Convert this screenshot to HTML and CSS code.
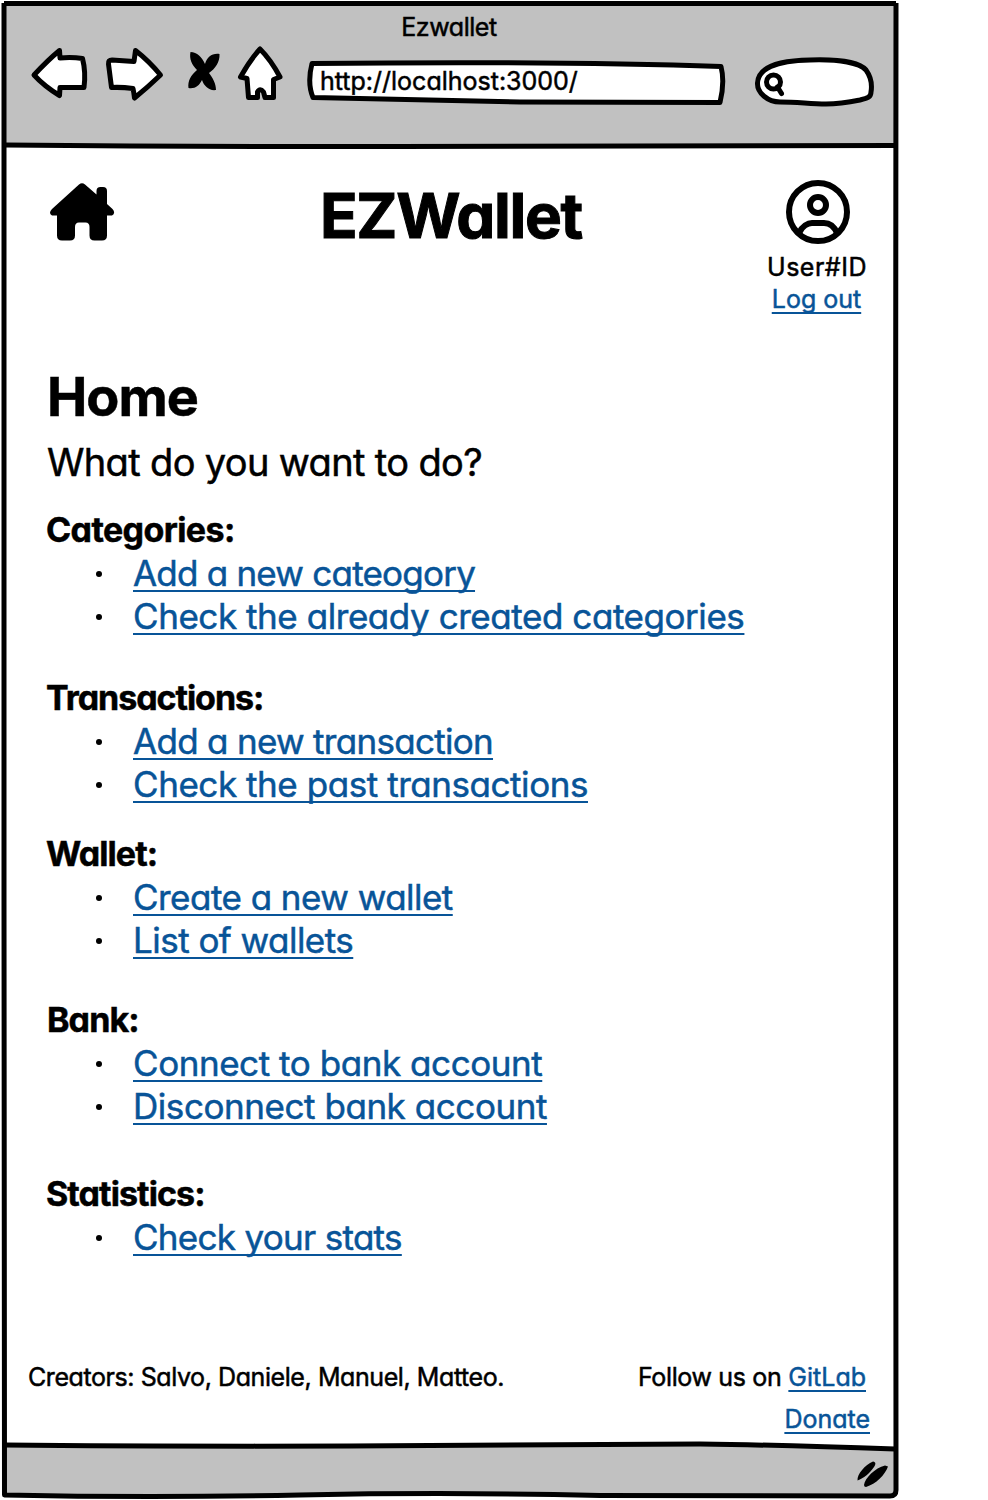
FILE: index.html
```html
<!DOCTYPE html>
<html lang="en">
<head>
<meta charset="utf-8">
<title>Ezwallet</title>
<link rel="stylesheet" href="styles.css">
</head>
<body>
<div class="window">
  <svg class="frame" width="900" height="1500" viewBox="0 0 900 1500" aria-hidden="true">
    <path class="bar" d="M4 3H896V146H4Z"/>
    <path class="bar" d="M4 1445L300 1446L700 1444L895 1449V1496H4Z"/>
    <path class="line" d="M4 3.500H896"/>
    <path class="line" d="M4 3L4 900L4.500 1495Q150 1498 300 1495T600 1495.500L890 1496Q896 1496 896 1490L895.500 600L896 3"/>
    <path class="line" d="M5 145Q200 147 400 146.500T895 145.500"/>
    <path class="line" d="M5 1445Q150 1446.500 350 1446T700 1444Q780 1445 895 1449"/>
  </svg>
  <header class="chrome">
    <div class="caption">Ezwallet</div>
    <div class="toolbar">
      <svg class="nav" width="260" height="64" viewBox="28 42 260 64" aria-hidden="true">
        <path class="icon" d="M59.500 50.500Q48 60 34 75Q44 86 59.500 95.500L60 87.500L84 87.500Q86 72 82.500 58.500Q72 57 60 58Z"/>
        <path class="icon" d="M135.500 50.500Q149 61 160.500 75Q148 87 134.500 98Q134 93 133 88.500Q122 87 111.500 87.500Q110 76 108.500 64Q108 60 112 60L134 61.500Z"/>
        <path d="M190.500 52C197 52 202 57 205 64C207 57 212 53 219.500 54C220 62 215 69 209 73C213 78 216 84 216 90C209 91 204 86 202 80C199 86 195 89 188.500 88C187.500 81 191 75 197 70C192 65 189 59 190.500 52Z"/>
        <path class="icon" d="M260 49Q250 60 240.500 77L247 78.500L248.500 97.500H257.500V92Q260 87.500 263.500 92L265 97.500H273.500V79.500L280 77Q271 60 260 49Z"/>
      </svg>
      <div class="address">
        <svg class="shape" width="422" height="50" viewBox="305 58 422 50" aria-hidden="true"><path class="icon" d="M312 63.500Q560 61 721 66.500Q725 82 720 102.500L520 102L313 97.500Q307 83 312 63.500Z"/></svg>
        <span>http://localhost:3000/</span>
      </div>
      <svg class="search" width="126" height="56" viewBox="752 54 126 56" aria-hidden="true">
        <path class="icon" d="M780 102C768 102 757 93 757.500 83C758 69 775 60.500 810 60C840 59 860 63 866 70C871 77 872 86 871 92C871 97 868 98 860 100C850 102 840 104 826 104C810 104 798 102 780 102Z"/>
        <g class="lens"><circle cx="773.500" cy="82" r="7"/><path d="M777.500 87L781.500 93.500"/></g>
      </svg>
    </div>
  </header>
  <main class="page">
    <div class="top">
      <svg class="house" width="66" height="60" viewBox="49 182 66 60" aria-hidden="true"><path d="M79 184.500Q82 182 85 184.500L96.500 194.500V191Q96.500 187 100.500 187H103Q107 187 107 191V204L112.500 209Q116 213 112 215.500H107V235.500Q107 240.500 102 240.500H94.500Q89.500 240.500 89.500 235.500V227Q89.500 222.500 85.500 222.500H79Q75 222.500 75 227V235.500Q75 240.500 70 240.500H62Q57 240.500 57 235.500V215.500H52Q48 213 52 209Z"/></svg>
      <h1 class="brand">EZWallet</h1>
      <div class="user">
        <svg class="avatar" width="64" height="64" viewBox="0 0 64 64" aria-hidden="true"><circle cx="32" cy="32" r="29"/><circle cx="32" cy="25" r="8"/><path d="M13 53C16 46 22 43 26 43H38C43 43 48 46 51 53"/></svg>
        <span class="user-id">User#ID</span>
        <a class="logout">Log out</a>
      </div>
    </div>
    <h2 class="heading">Home</h2>
    <p class="question">What do you want to do?</p>
    <section class="group categories"><h3>Categories:</h3><ul><li><a class="snug">Add a new cateogory</a></li><li><a>Check the already created categories</a></li></ul></section>
    <section class="group transactions"><h3>Transactions:</h3><ul><li><a class="snug">Add a new transaction</a></li><li><a>Check the past transactions</a></li></ul></section>
    <section class="group wallet"><h3>Wallet:</h3><ul><li><a>Create a new wallet</a></li><li><a>List of wallets</a></li></ul></section>
    <section class="group bank"><h3>Bank:</h3><ul><li><a>Connect to bank account</a></li><li><a>Disconnect bank account</a></li></ul></section>
    <section class="group statistics"><h3>Statistics:</h3><ul><li><a class="snug">Check your stats</a></li></ul></section>
  </main>
  <footer class="footer">
    <span class="creators">Creators: Salvo, Daniele, Manuel, Matteo.</span>
    <div class="links">
      <div class="follow"><span>Follow us on</span><a>GitLab</a></div>
      <a>Donate</a>
    </div>
  </footer>
  <svg class="grip" width="32" height="27" viewBox="0 0 32 27" aria-hidden="true"><path d="M0.500 19.500C0 13 8 4 16 0.500C19 1 19 3 17 6C12 13 7 17 0.500 19.500ZM7 24C8 17 18 7 28 4.500L31 5.500C28 14 19 23 9 26Q7 26 7 24Z"/></svg>
</div>
</body>
</html>
```
FILE: styles.css
```css
* { box-sizing: border-box; }
body {
  margin: 0;
  background: #fff;
  color: #000;
  font-family: Inter, "Liberation Sans", sans-serif;
  font-feature-settings: "cv11";
  -webkit-text-stroke: 0.5px currentColor;
}
h1, h2, h3, p, ul { margin: 0; padding: 0; }
a {
  color: #085498;
  text-decoration: underline;
  text-decoration-thickness: 2px;
  text-decoration-skip-ink: none;
  text-underline-offset: 4px;
}

.window { position: relative; width: 900px; height: 1500px; display: flex; flex-direction: column; }
.frame { position: absolute; inset: 0; z-index: -1; }
.bar { fill: #c1c1c1; }
.line { fill: none; stroke: #000; stroke-width: 5; stroke-linejoin: round; }
.icon { fill: #fff; stroke: #000; stroke-width: 5; stroke-linejoin: round; stroke-linecap: round; }
.lens { fill: #fff; stroke: #000; stroke-width: 5; stroke-linecap: round; }

/* Browser bar */
.chrome { height: 148px; }
.caption { height: 42px; padding: 6px 2px 0 0; text-align: center; font-size: 25px; line-height: 42px; letter-spacing: -0.45px; }
.toolbar { display: flex; align-items: flex-start; height: 68px; padding-left: 28px; }
.address { position: relative; width: 422px; height: 50px; margin: 16px 0 0 17px; padding-left: 15px; font-size: 25px; line-height: 46px; }
.shape { position: absolute; inset: 0; z-index: -1; }
.search { margin: 12px 0 0 25px; }

/* Page */
.page { flex: 1; padding: 0 28px 0 47px; }
.top { display: flex; justify-content: space-between; height: 214px; padding-top: 32px; }
.house { margin: 2px 0 0 2px; }
.brand { margin-left: 25px; font-size: 62px; line-height: 71px; letter-spacing: -1.3px; -webkit-text-stroke-width: 1px; }
.user { display: flex; flex-direction: column; align-items: center; width: 110px; font-size: 25px; line-height: 32px; }
.avatar { margin: 0 0 7px 2px; fill: none; stroke: #000; stroke-width: 6; }
.user-id { letter-spacing: 0.5px; }
.logout { margin-right: 1px; }
.heading { font-size: 54px; line-height: 70px; letter-spacing: -1px; }
.question { font-size: 38px; line-height: 60px; letter-spacing: -0.65px; }

.group { font-size: 35px; letter-spacing: -0.44px; }
.group h3 { margin-left: -1px; font-size: 34px; line-height: 44px; letter-spacing: -0.9px; }
.group ul { list-style: none; }
.group li { position: relative; height: 43px; padding-left: 86px; line-height: 43px; }
.group li::before { content: ""; position: absolute; left: 49px; top: 19px; width: 6px; height: 6px; border-radius: 50%; background: #000; }
.group .snug { letter-spacing: -0.7px; }
.group.categories { margin-top: 16px; }
.categories h3 { letter-spacing: -0.6px; }
.categories .snug { letter-spacing: -0.78px; }
.transactions { margin-top: 38px; }
.transactions h3 { letter-spacing: -1.05px; }
.wallet { margin-top: 26px; letter-spacing: -0.53px; }
.bank { margin-top: 36px; }
.bank h3 { margin-left: 0; }
.statistics { margin-top: 44px; }

/* Footer */
.footer { display: flex; justify-content: space-between; height: 144px; padding: 0 30px 0 28px; font-size: 25px; line-height: 42px; }
.creators { letter-spacing: -0.42px; }
.links { display: flex; flex-direction: column; align-items: flex-end; }
.follow { display: flex; gap: 7px; margin-right: 4px; }
.follow span { letter-spacing: -0.35px; }
.grip { position: absolute; right: 11px; bottom: 12px; }
```
